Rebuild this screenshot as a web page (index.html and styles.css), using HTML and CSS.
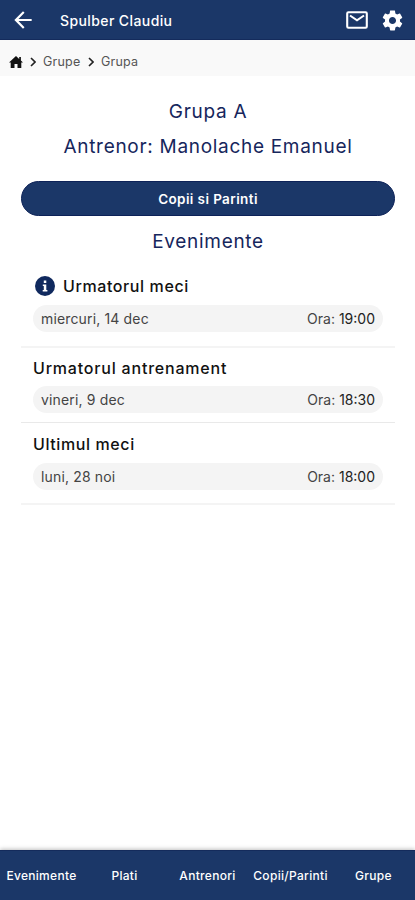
FILE: index.html
```html
<!DOCTYPE html>
<html lang="ro">
<head>
    <meta charset="UTF-8">
    <meta name="viewport" content="width=device-width, initial-scale=1.0">
    <title>Grupa A</title>
    <link rel="stylesheet" href="styles.css">
</head>
<body>
    <header class="topbar">
        <svg class="back" viewBox="0 0 24 24"><path d="M20 11H7.83l5.59-5.59L12 4l-8 8 8 8 1.41-1.41L7.83 13H20z"/></svg>
        <span class="user-name">Spulber Claudiu</span>
        <svg class="mail" viewBox="0 0 22 18"><rect x="1.2" y="1.2" width="19.6" height="15.6" rx="1.2"/><path d="M4 4.5l7 4.8 7-4.8"/></svg>
        <svg class="settings" viewBox="0 0 24 24"><path d="M19.14 12.94c.04-.3.06-.61.06-.94 0-.32-.02-.64-.07-.94l2.03-1.58c.18-.14.23-.41.12-.61l-1.92-3.32c-.12-.22-.37-.29-.59-.22l-2.39.96c-.5-.38-1.03-.7-1.62-.94l-.36-2.54c-.04-.24-.24-.41-.48-.41h-3.84c-.24 0-.43.17-.47.41l-.36 2.54c-.59.24-1.13.57-1.62.94l-2.39-.96c-.22-.08-.47 0-.59.22L2.74 8.87c-.12.21-.08.47.12.61l2.03 1.58c-.05.3-.09.63-.09.94s.02.64.07.94l-2.03 1.58c-.18.14-.23.41-.12.61l1.92 3.32c.12.22.37.29.59.22l2.39-.96c.5.38 1.03.7 1.62.94l.36 2.54c.05.24.24.41.48.41h3.84c.24 0 .44-.17.47-.41l.36-2.54c.59-.24 1.13-.56 1.62-.94l2.39.96c.22.08.47 0 .59-.22l1.92-3.32c.12-.22.07-.47-.12-.61l-2.01-1.58zM12 15.4c-1.88 0-3.4-1.52-3.4-3.4s1.52-3.4 3.4-3.4 3.4 1.52 3.4 3.4-1.52 3.4-3.4 3.4z"/></svg>
    </header>

    <nav class="breadcrumb">
        <svg class="home" viewBox="0 0 14 12"><path d="M7 0L0 6.4h1.7V12h3.8V8h3v4h3.8V6.4H14L11.9 4.5V1h-1.7v2z"/></svg>
        <svg class="chevron" viewBox="0 0 6 10"><path d="M1 1l4 4-4 4"/></svg>
        <span class="crumb crumb-group">Grupe</span>
        <svg class="chevron" viewBox="0 0 6 10"><path d="M1 1l4 4-4 4"/></svg>
        <span class="crumb">Grupa</span>
    </nav>

    <main class="content">
        <h1 class="title">Grupa A</h1>
        <h2 class="title">Antrenor: Manolache Emanuel</h2>
        <button class="main-button">Copii si Parinti</button>
        <h2 class="title events-title">Evenimente</h2>

        <section class="event event-next">
            <h3 class="event-name">
                <svg class="info" viewBox="0 0 20 20"><circle cx="10" cy="10" r="10"/><path d="M8.8 4.6h2.5v2.3H8.8zM7.8 8.4h3.5v5.5h1.1v1.5H7.7v-1.5h1.1v-4h-1z"/></svg>
                Urmatorul meci
            </h3>
            <div class="event-row"><span class="date">miercuri, 14 dec</span><span class="hour">Ora: <b>19:00</b></span></div>
        </section>
        <section class="event event-training">
            <h3 class="event-name training">Urmatorul antrenament</h3>
            <div class="event-row"><span class="date">vineri, 9 dec</span><span class="hour">Ora: <b>18:30</b></span></div>
        </section>
        <section class="event event-last">
            <h3 class="event-name">Ultimul meci</h3>
            <div class="event-row"><span class="date">luni, 28 noi</span><span class="hour">Ora: <b>18:00</b></span></div>
        </section>
    </main>

    <footer class="bottom-nav">
        <a>Evenimente</a>
        <a>Plati</a>
        <a>Antrenori</a>
        <a>Copii/Parinti</a>
        <a>Grupe</a>
    </footer>
</body>
</html>
```
FILE: styles.css
```css
* {
    box-sizing: border-box;
}

body {
    margin: 0;
    height: 900px;
    display: flex;
    flex-direction: column;
    background-color: #fff;
    color: #111;
    font-family: Inter, sans-serif;
    overflow: hidden;
}

svg {
    display: block;
    flex: none;
    fill: currentColor;
}

h1, h2, h3 {
    margin: 0;
    font-weight: 400;
}

.topbar {
    height: 40px;
    flex: none;
    display: flex;
    align-items: center;
    padding: 1px 10px 0 10px;
    background-color: #1b3768;
    border-bottom: 1px solid #142b5c;
    color: #fff;
}

.back {
    width: 26px;
    height: 26px;
}

.user-name {
    flex: 1;
    margin-left: 24px;
    font-size: 14px;
    font-weight: 500;
    letter-spacing: 0.4px;
}

.mail {
    width: 22px;
    height: 18px;
    margin-right: 12px;
    fill: none;
    stroke: #fff;
    stroke-width: 2.1;
}

.settings {
    width: 25px;
    height: 25px;
}

.breadcrumb {
    height: 36px;
    flex: none;
    display: flex;
    align-items: center;
    padding: 7px 9px 0;
    background-color: #f9f9f9;
}

.home {
    width: 14px;
    height: 12px;
    margin-right: 7px;
}

.chevron {
    width: 6px;
    height: 10px;
    fill: none;
    stroke: #222;
    stroke-width: 1.6;
}

.crumb {
    width: 38px;
    margin-left: 7px;
    font-size: 12.5px;
    letter-spacing: 0.2px;
    color: #555;
}

.crumb-group {
    margin-right: 7px;
}

.content {
    flex: 1;
    padding: 18px 20px 0 21px;
}

.title {
    height: 35px;
    line-height: 35px;
    text-align: center;
    font-size: 19px;
    letter-spacing: 0.7px;
    color: #16265c;
    white-space: nowrap;
}

.main-button {
    display: block;
    width: 100%;
    height: 35px;
    margin-top: 17px;
    padding: 0;
    border: 1px solid #0d2258;
    border-radius: 18px;
    background-color: #1b3768;
    color: #fff;
    font-family: inherit;
    font-size: 13.5px;
    font-weight: 600;
    letter-spacing: 0.4px;
}

.events-title {
    margin-top: 8px;
}

.event {
    padding: 0 12px;
    border-bottom: 2px solid #f4f4f4;
}

.event-next {
    height: 89px;
    padding-top: 13px;
}

.event-training {
    height: 75px;
    padding-top: 6px;
    border-bottom: 1px solid #e9e9e9;
}

.event-last {
    height: 82px;
    padding-top: 7px;
}

.event-name {
    display: flex;
    align-items: center;
    height: 28px;
    margin-bottom: 5px;
    font-size: 16px;
    font-weight: 500;
    letter-spacing: 0.6px;
}

.training {
    margin-bottom: 4px;
    letter-spacing: 0.8px;
}

.info {
    width: 20px;
    height: 20px;
    margin: 0 8px 0 2px;
    color: #10295e;
}

.info path {
    fill: #fff;
}

.event-row {
    display: flex;
    justify-content: space-between;
    align-items: center;
    height: 27px;
    padding: 0 8px;
    border-radius: 14px;
    background-color: #f4f4f4;
    font-size: 14px;
    color: #444;
}

.date {
    letter-spacing: 0.15px;
}

.hour b {
    font-weight: 400;
    color: #222;
}

.bottom-nav {
    height: 50px;
    flex: none;
    display: grid;
    grid-template-columns: repeat(5, 1fr);
    align-items: center;
    background-color: #1b3768;
    border-top: 1px solid #142b5c;
    box-shadow: 0 -1px 4px rgba(0, 0, 0, 0.25);
    color: #fff;
    font-size: 12px;
    font-weight: 500;
    letter-spacing: 0.3px;
    text-align: center;
}
```
